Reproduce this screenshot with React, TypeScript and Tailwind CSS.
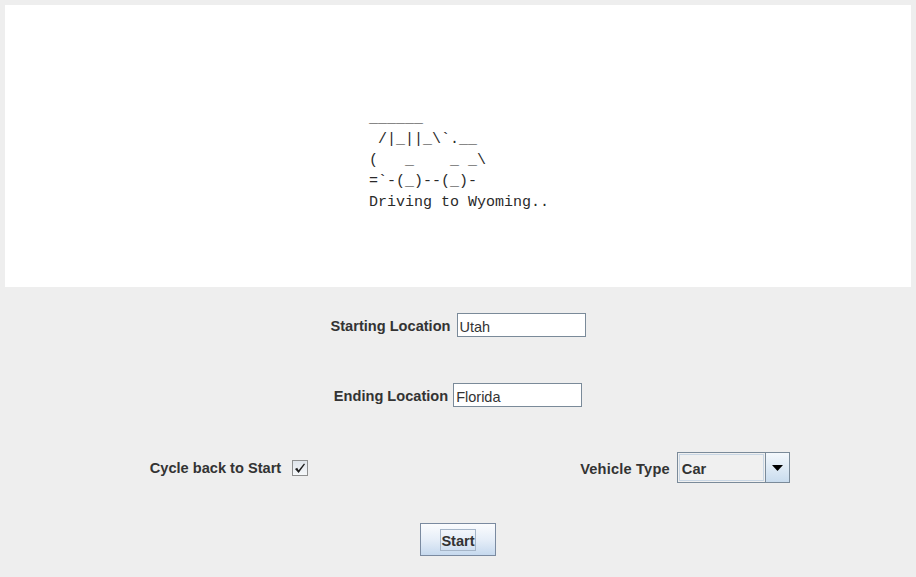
import { useState } from 'react';

const carArt = [
  '______',
  ' /|_||_\\`.__',
  '(   _    _ _\\',
  "=`-(_)--(_)-",
  'Driving to Wyoming..',
];

const labelClass = "text-[14.6px] font-bold text-[#333333] font-['Liberation_Sans',Arial,sans-serif] leading-none";

function TextField({ value, onChange }: { value: string; onChange: (v: string) => void }) {
  return (
    <input
      className="h-[24px] w-[129px] border border-[#7a8a99] bg-white px-[2px] pt-[3px] text-[14.5px] text-[#333333] font-['Liberation_Sans',Arial,sans-serif] outline-none"
      onChange={(e) => onChange(e.target.value)}
      type="text"
      value={value}
    />
  );
}

export default function App() {
  const [start, setStart] = useState('Utah');
  const [end, setEnd] = useState('Florida');
  const [cycle, setCycle] = useState(true);

  return (
    <div className="h-[577px] w-[916px] overflow-hidden bg-[#eeeeee]">
      <div className="mx-[5px] mt-[5px] h-[282px] bg-white pl-[364px] pt-[103px]">
        <pre className="text-[15px] leading-[21px] text-[#2a2a2a] font-['Liberation_Mono','Courier_New',monospace]">
          {carArt.join('\n')}
        </pre>
      </div>

      <div className="flex flex-col">
        <div className="mt-[26px] flex h-[24px] items-center justify-center gap-[6px]">
          <span className={`${labelClass} pt-[3px]`}>Starting Location</span>
          <TextField onChange={setStart} value={start} />
        </div>

        <div className="mt-[46px] flex h-[24px] items-center justify-center gap-[5px]">
          <span className={`${labelClass} pt-[3px]`}>Ending Location</span>
          <TextField onChange={setEnd} value={end} />
        </div>

        <div className="mt-[45px] grid h-[31px] grid-cols-2">
          <div className="flex items-center justify-center gap-[11px]">
            <span className={`${labelClass} pt-[2px]`}>Cycle back to Start</span>
            <button
              aria-checked={cycle}
              className="grid size-[16px] place-items-center border border-[#8e8f8f] bg-gradient-to-b from-[#dfe4ea] to-[#f6f8fa]"
              onClick={() => setCycle((c) => !c)}
              role="checkbox"
              type="button"
            >
              {cycle ? <CheckIcon /> : null}
            </button>
          </div>

          <div className="flex items-center justify-center gap-[7px] pr-[4px]">
            <span className={`${labelClass} pt-[3px] tracking-[0.2px]`}>Vehicle Type</span>
            <div className="flex h-[31px] w-[113px] border border-[#7a8a99] bg-[#f0f0f0]">
              <div className="m-[1px] flex flex-1 items-center border border-[#c8d6e4] bg-[#f0f0f0] pl-[2px]">
                <span className={`${labelClass} pt-[3px]`}>Car</span>
              </div>
              <div className="grid w-[24px] place-items-center border-l border-[#7a8a99] bg-gradient-to-b from-[#f4f8fc] to-[#c9dcee]">
                <svg aria-hidden="true" className="h-[6px] w-[11px]" viewBox="0 0 11 6">
                  <path d="M0 0h11L5.5 6Z" fill="#000" />
                </svg>
              </div>
            </div>
          </div>
        </div>

        <div className="mt-[40px] flex justify-center">
          <button
            className="grid h-[33px] w-[76px] place-items-center border border-[#7a8aa0] bg-gradient-to-b from-[#fbfcfe] via-[#e6eef8] to-[#c6d9ee]"
            type="button"
          >
            <span className={`${labelClass} mt-[1px] flex h-[22px] w-[36px] items-center justify-center border border-[#a5b5c8] pt-[3px]`}>
              Start
            </span>
          </button>
        </div>
      </div>
    </div>
  );
}

function CheckIcon() {
  return (
    <svg aria-hidden="true" className="size-[12px]" viewBox="0 0 12 12">
      <path d="M1 7 3.2 5.8 4.6 8.2 10 1.5 11 2.3 4.6 11Z" fill="#1e1e1e" />
    </svg>
  );
}
